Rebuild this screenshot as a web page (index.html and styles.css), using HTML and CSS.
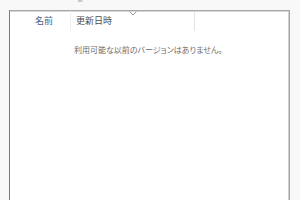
FILE: index.html
```html
<!DOCTYPE html>
<html lang="ja">
<head>
<meta charset="utf-8">
<link rel="stylesheet" href="styles.css">
</head>
<body>
<div class="topbar"><span class="tiny"></span></div>
<div class="panel">
  <div class="header">
    <div class="col col-name">名前</div>
    <div class="col col-date">更新日時
      <svg class="caret" width="8" height="5" viewBox="0 0 8 5"><path d="M0.5 0.5 L4 4 L7.5 0.5" fill="none" stroke="#9a9a9a" stroke-width="1"/></svg>
    </div>
    <div class="col col-rest"></div>
  </div>
  <div class="empty">利用可能な以前のバージョンはありません。</div>
</div>
</body>
</html>
```

FILE: styles.css
```css
html, body {
  margin: 0;
  padding: 0;
  background: #f8f8f8;
  height: 200px;
  overflow: hidden;
  font-family: "Noto Sans CJK JP", "Noto Sans", sans-serif;
}
.topbar {
  height: 10px;
  position: relative;
}
.tiny {
  position: absolute;
  left: 78px;
  top: 0;
  width: 5px;
  height: 2px;
  background: linear-gradient(90deg, #b9c8dc 0 60%, #e8d2bc 60% 100%);
}
.panel {
  margin-left: 9px;
  width: 279px;
  height: 190px;
  background: #fff;
  border-left: 1px solid #7a7a7a;
  border-top: 1px solid #a9a9a9;
  border-right: 1px solid #a3a3a3;
  box-shadow: inset 0 1px 0 #d6d6d6, inset -1px 0 0 #d0d0d0;
}
.header {
  display: flex;
  height: 20px;
  position: relative;
}
.col {
  font-size: 9px;
  line-height: 20px;
  color: #4c5a72;
  box-sizing: border-box;
  position: relative;
}
.col-name {
  width: 61px;
  padding-left: 25px;
  border-right: 1px solid #eeeeee;
  color: #4a5f86;
}
.col-date {
  width: 124px;
  padding-left: 5px;
  border-right: 1px solid #e4e4e4;
  color: #4d4d4d;
}
.col-rest {
  flex: 1;
}
.caret {
  position: absolute;
  left: 58px;
  top: 0;
}
.empty {
  margin-top: 13px;
  padding-left: 64px;
  font-size: 8px;
  line-height: 12px;
  color: #6d6d6d;
  font-feature-settings: "palt";
}
```
